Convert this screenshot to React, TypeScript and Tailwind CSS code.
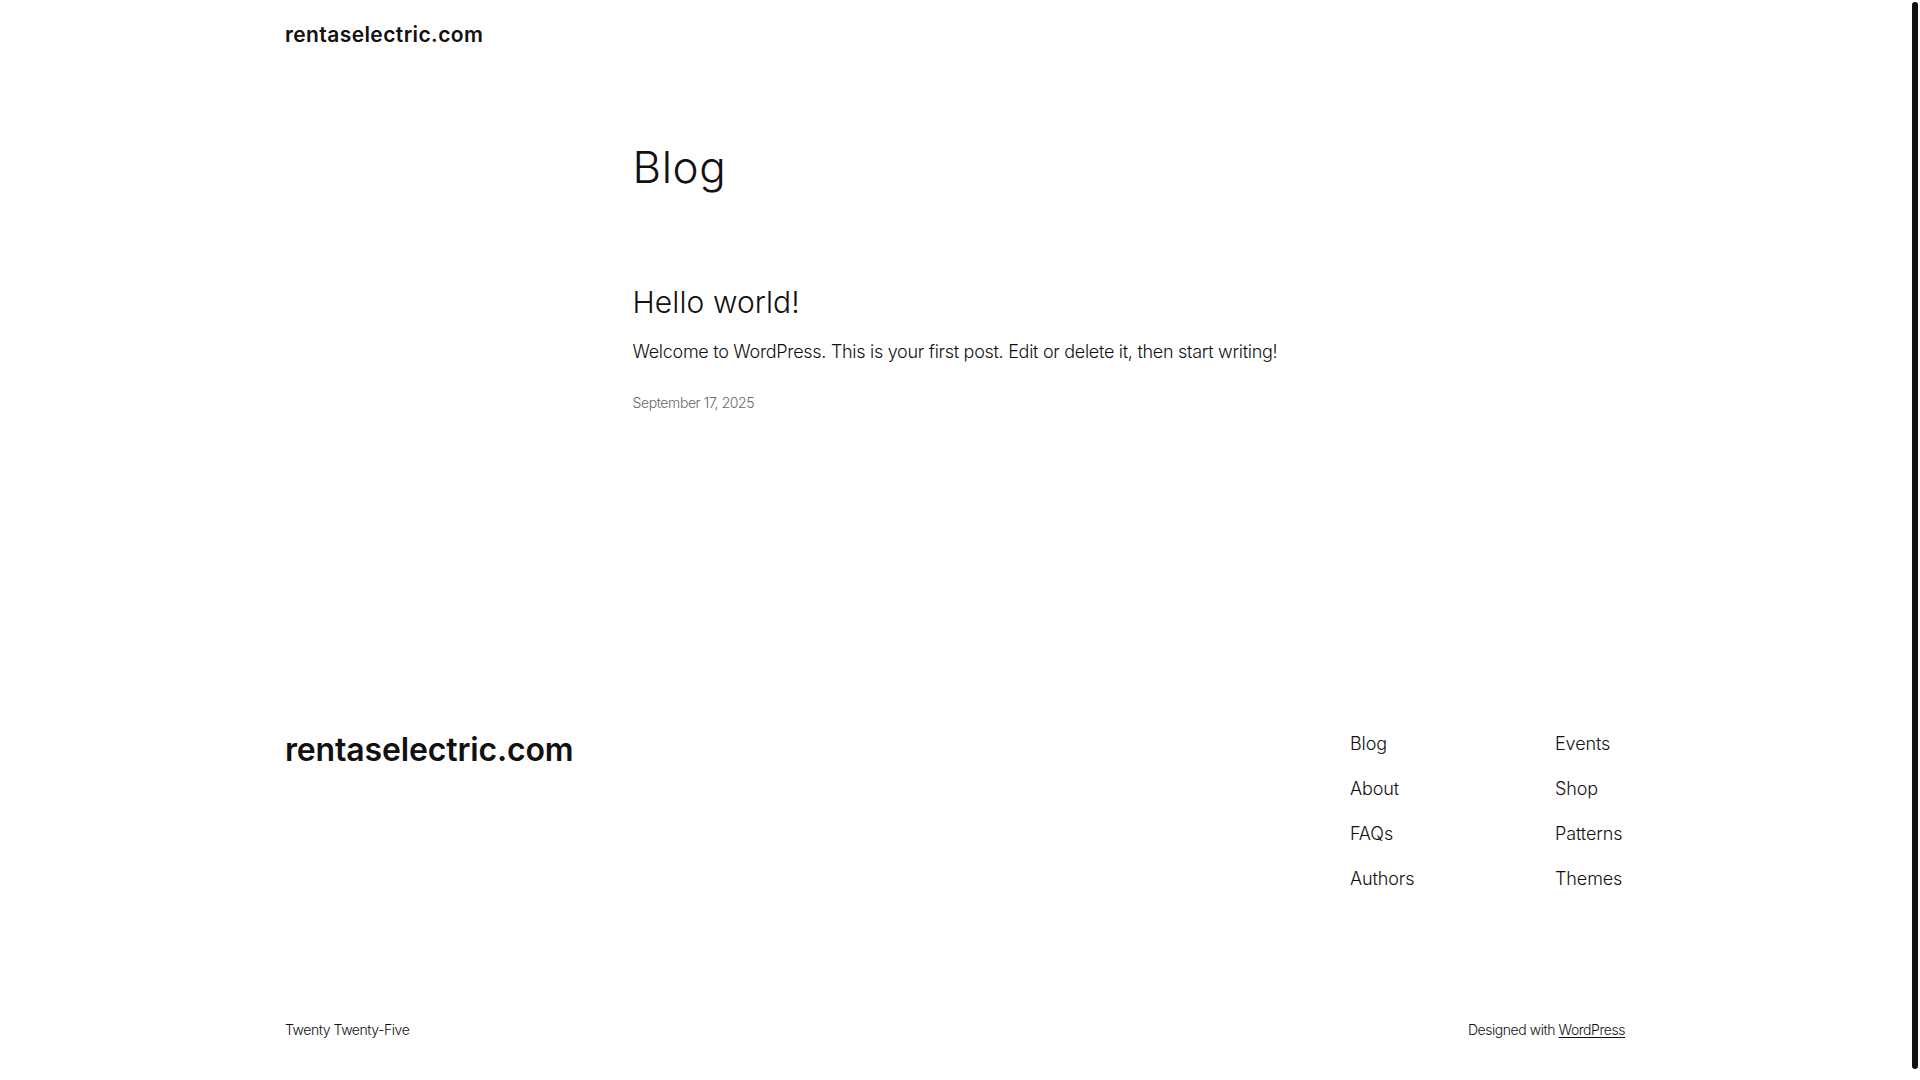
import React from "react";

const font = { fontFamily: "Inter, 'Noto Sans', sans-serif" };

export default function App() {
  return (
    <div className="relative h-screen w-full overflow-hidden bg-white text-[#111111]" style={font}>
      <div className="flex w-[1910px] flex-col">
        {/* Header */}
        <header className="mx-auto w-[1340px] pt-[21px]">
          <a className="block text-[21px] font-semibold leading-[28px] tracking-[0.4px]">rentaselectric.com</a>
        </header>

        {/* Main */}
        <main className="mx-auto w-[645px]">
          <h1 className="mt-[92px] text-[44px] font-light leading-[52px] tracking-[0.6px]">Blog</h1>
          <article className="mt-[91px]">
            <h2 className="text-[30px] font-light leading-[36px] tracking-[0.1px]">Hello world!</h2>
            <p className="mt-[18px] whitespace-nowrap text-[18px] font-light leading-[27px] tracking-[-0.29px]">
              Welcome to WordPress. This is your first post. Edit or delete it, then start writing!
            </p>
            <div className="mt-[28px] text-[14px] font-light leading-[20px] tracking-[-0.4px] text-[#686868]">
              September 17, 2025
            </div>
          </article>
        </main>

        {/* Footer */}
        <footer className="mx-auto mt-[317px] w-[1340px]">
          <div className="flex items-start justify-between">
            <div className="pt-[2px] text-[32px] font-semibold leading-[36px] tracking-[-0.15px]">rentaselectric.com</div>
            <nav className="grid w-[275px] grid-cols-[205px_1fr] text-[18px] font-light leading-[27px] tracking-[-0.1px]">
              <ul className="flex flex-col gap-[18px]">
                <li>Blog</li>
                <li>About</li>
                <li>FAQs</li>
                <li>Authors</li>
              </ul>
              <ul className="flex flex-col gap-[18px]">
                <li>Events</li>
                <li>Shop</li>
                <li>Patterns</li>
                <li>Themes</li>
              </ul>
            </nav>
          </div>
          <div className="mt-[128px] flex items-center justify-between text-[14px] font-light leading-[20px] tracking-[-0.45px]">
            <span>Twenty Twenty-Five</span>
            <span>
              Designed with <a className="underline underline-offset-2">WordPress</a>
            </span>
          </div>
        </footer>
      </div>

      {/* scrollbar thumb */}
      <div className="absolute right-[2px] top-[2px] h-[1067px] w-[6px] rounded-full bg-[#111111]" />
    </div>
  );
}
